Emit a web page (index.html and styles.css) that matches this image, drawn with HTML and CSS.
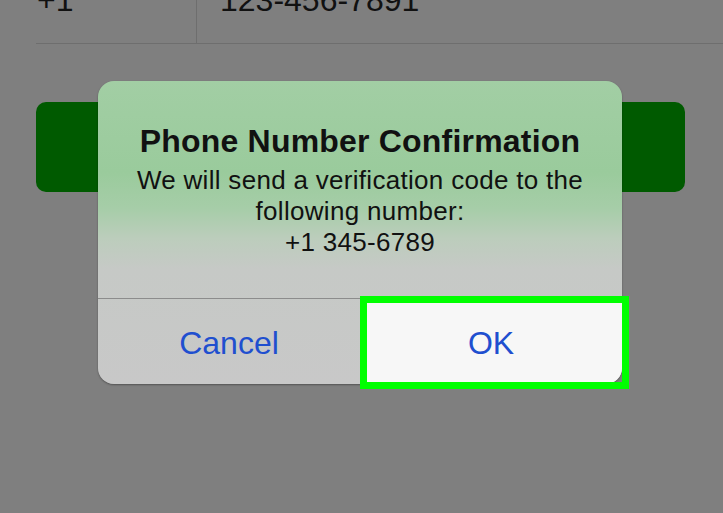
FILE: index.html
```html
<!DOCTYPE html>
<html>
<head>
<meta charset="utf-8">
<link rel="stylesheet" href="styles.css">
</head>
<body>
<div class="screen">
  <div class="phone-row">
    <div class="cell code"><span class="val">+1</span></div>
    <div class="cell number"><span class="val">123-456-7891</span></div>
  </div>
  <div class="next-btn"></div>

  <div class="alert">
    <div class="alert-body">
      <div class="alert-title">Phone Number Confirmation</div>
      <div class="alert-msg">We will send a verification code to the<br>following number:<br>+1 345-6789</div>
    </div>
    <div class="alert-actions">
      <div class="action cancel">Cancel</div>
      <div class="action ok">OK</div>
    </div>
  </div>
  <div class="highlight"></div>
</div>
</body>
</html>
```

FILE: styles.css
```css
html, body {
  margin: 0;
  padding: 0;
}
body {
  background: #7f7f7f;
  font-family: "Liberation Sans", Arial, sans-serif;
  width: 723px;
  height: 513px;
  overflow: hidden;
}
.screen {
  position: relative;
  width: 723px;
  height: 513px;
}
.phone-row {
  display: flex;
  margin-left: 36px;
  height: 43px;
  border-bottom: 1px solid #6e6e6e;
  overflow: hidden;
}
.cell {
  display: flex;
  align-items: flex-start;
}
.code {
  width: 160px;
  border-right: 1px solid #6e6e6e;
}
.number {
  flex: 1;
  padding-left: 23px;
}
.val {
  font-size: 32px;
  line-height: 32px;
  margin-top: -16px;
  color: #111;
}
.code .val {
  margin-left: 1px;
}
.next-btn {
  margin: 58px 0 0 36px;
  width: 649px;
  height: 90px;
  background: #005a00;
  border-radius: 10px;
}
.alert {
  position: absolute;
  left: 98px;
  top: 81px;
  width: 524px;
  height: 303px;
  border-radius: 16px;
  overflow: hidden;
  display: flex;
  flex-direction: column;
  background: linear-gradient(180deg, #a2ceA4 0%, #9acb9c 30%, #a6cda8 42%, #bccdbc 52%, #c6c9c6 62%, #c8c8c8 100%);
  box-shadow: 0 1px 2px rgba(0,0,0,0.35);
}
.alert-body {
  height: 217px;
  border-bottom: 1px solid #8c8c8c;
  text-align: center;
  color: #111;
}
.alert-title {
  margin-top: 42px;
  font-size: 32px;
  font-weight: bold;
  line-height: 36px;
  letter-spacing: 0.2px;
}
.alert-msg {
  margin-top: 6px;
  font-size: 26px;
  line-height: 31px;
  letter-spacing: 0.3px;
}
.alert-actions {
  flex: 1;
  display: flex;
}
.action {
  flex: 1;
  display: flex;
  align-items: center;
  justify-content: center;
  font-size: 32px;
  color: #1f4fcf;
  padding-top: 3px;
}
.ok {
  background: #f7f7f7;
}
.highlight {
  position: absolute;
  left: 360px;
  top: 296px;
  width: 255px;
  height: 79px;
  border: 7px solid #00ff00;
}
```
